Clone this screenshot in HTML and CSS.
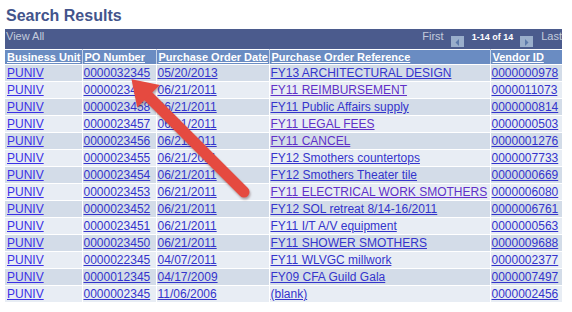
FILE: index.html
```html
<!DOCTYPE html>
<html lang="en">
<head>
  <meta charset="UTF-8" />
  <title>Search Results</title>
  <link rel="stylesheet" href="styles.css">
</head>
<body>
  <div class="page">
    <h1 class="title">Search Results</h1>

    <div class="navbar">
      <a class="view-all">View All</a>
      <div class="pager">
        <span class="pager-text">First</span>
        <span class="pager-btn">
          <svg width="13" height="11" viewBox="0 0 13 11"><rect width="13" height="11" fill="#9aaecb"/><polygon points="8,3 8,10 4.5,6.5" fill="#5c79aa"/></svg>
        </span>
        <span class="pager-count">1-14 of 14</span>
        <span class="pager-btn">
          <svg width="13" height="11" viewBox="0 0 13 11"><rect width="13" height="11" fill="#9aaecb"/><polygon points="5,3 5,10 8.5,6.5" fill="#5c79aa"/></svg>
        </span>
        <span class="pager-text">Last</span>
      </div>
    </div>

    <table class="results">
      <colgroup>
        <col class="c-unit"><col class="c-po"><col class="c-date"><col class="c-ref"><col class="c-vendor">
      </colgroup>
      <thead>
        <tr>
          <th><a>Business Unit</a></th>
          <th><a>PO Number</a></th>
          <th><a>Purchase Order Date</a></th>
          <th><a>Purchase Order Reference</a></th>
          <th><a>Vendor ID</a></th>
        </tr>
      </thead>
      <tbody>
        <tr><td><a>PUNIV</a></td><td><a>0000032345</a></td><td><a>05/20/2013</a></td><td><a>FY13 ARCHITECTURAL DESIGN</a></td><td><a>0000000978</a></td></tr>
        <tr><td><a>PUNIV</a></td><td><a>0000023459</a></td><td><a>06/21/2011</a></td><td><a class="visited">FY11 REIMBURSEMENT</a></td><td><a>0000011073</a></td></tr>
        <tr><td><a>PUNIV</a></td><td><a>0000023458</a></td><td><a>06/21/2011</a></td><td><a>FY11 Public Affairs supply</a></td><td><a>0000000814</a></td></tr>
        <tr><td><a>PUNIV</a></td><td><a>0000023457</a></td><td><a>06/21/2011</a></td><td><a class="visited">FY11 LEGAL FEES</a></td><td><a>0000000503</a></td></tr>
        <tr><td><a>PUNIV</a></td><td><a>0000023456</a></td><td><a>06/21/2011</a></td><td><a class="visited">FY11 CANCEL</a></td><td><a>0000001276</a></td></tr>
        <tr><td><a>PUNIV</a></td><td><a>0000023455</a></td><td><a>06/21/2011</a></td><td><a>FY12 Smothers countertops</a></td><td><a>0000007733</a></td></tr>
        <tr><td><a>PUNIV</a></td><td><a>0000023454</a></td><td><a>06/21/2011</a></td><td><a>FY12 Smothers Theater tile</a></td><td><a>0000000669</a></td></tr>
        <tr><td><a>PUNIV</a></td><td><a>0000023453</a></td><td><a>06/21/2011</a></td><td><a class="visited">FY11 ELECTRICAL WORK SMOTHERS</a></td><td><a>0000006080</a></td></tr>
        <tr><td><a>PUNIV</a></td><td><a>0000023452</a></td><td><a>06/21/2011</a></td><td><a>FY12 SOL retreat 8/14-16/2011</a></td><td><a>0000006761</a></td></tr>
        <tr><td><a>PUNIV</a></td><td><a>0000023451</a></td><td><a>06/21/2011</a></td><td><a>FY11 I/T A/V equipment</a></td><td><a>0000000563</a></td></tr>
        <tr><td><a>PUNIV</a></td><td><a>0000023450</a></td><td><a>06/21/2011</a></td><td><a>FY11 SHOWER SMOTHERS</a></td><td><a>0000009688</a></td></tr>
        <tr><td><a>PUNIV</a></td><td><a>0000022345</a></td><td><a>04/07/2011</a></td><td><a>FY11 WLVGC millwork</a></td><td><a>0000002377</a></td></tr>
        <tr><td><a>PUNIV</a></td><td><a>0000012345</a></td><td><a>04/17/2009</a></td><td><a>FY09 CFA Guild Gala</a></td><td><a>0000007497</a></td></tr>
        <tr><td><a>PUNIV</a></td><td><a>0000002345</a></td><td><a>11/06/2006</a></td><td><a>(blank)</a></td><td><a>0000002456</a></td></tr>
      </tbody>
    </table>
  </div>

  <!-- red callout arrow pointing at the first PO number -->
  <svg class="callout" width="572" height="312" viewBox="0 0 572 312">
    <line x1="146" y1="94" x2="244" y2="192" stroke="#e54a40" stroke-width="11" stroke-linecap="round"/>
    <polygon points="131.5,79.3 159.8,85 137.2,107.6" fill="#e54a40"/>
  </svg>
</body>
</html>
```

FILE: styles.css
```css
body {
  margin: 0;
  background: #fff;
  font-family: "Liberation Sans", Arial, sans-serif;
}

.page {
  width: 557px;
  padding: 0 5px;
}

.title {
  margin: 6px 0 4px;
  padding-left: 1px;
  font-size: 16px;
  line-height: 19px;
  font-weight: bold;
  color: #43548c;
}

a {
  text-decoration: underline;
  color: #3434cc;
  cursor: pointer;
}

/* grid navigation bar */
.navbar {
  display: flex;
  justify-content: space-between;
  height: 20px;
  box-sizing: border-box;
  padding: 1px 0 0 1px;
  background: #4b5b8d;
  font-size: 11px;
  line-height: 13px;
}

.view-all {
  color: #c3cbdc;
  text-decoration: none;
}

.pager {
  display: flex;
  align-items: flex-start;
}

.pager-text {
  color: #c3cbdc;
}

.pager-count {
  margin: 1px 0 0;
  color: #fff;
  font-weight: bold;
  font-size: 9px;
}

.pager-btn {
  display: block;
  height: 11px;
  margin: 6px 8px 0 7px;
}

.pager-btn svg {
  display: block;
}

/* results grid */
.results {
  width: 557px;
  table-layout: fixed;
  border-collapse: collapse;
  border-top: 1px solid #fff;
}

.c-unit { width: 77px; }
.c-po { width: 74px; }
.c-date { width: 113px; }
.c-ref { width: 221px; }
.c-vendor { width: 72px; }

.results th,
.results td {
  text-align: left;
  white-space: nowrap;
  overflow: hidden;
  border-right: 1px solid #fff;
  border-bottom: 1px solid #fff;
}

.results th:last-child,
.results td:last-child {
  border-right: none;
}

.results th {
  height: 14px;
  padding: 1px 1px 0 2px;
  background: #6a8cc2;
  border-right-color: #c9d5e7;
  font-size: 11px;
  line-height: 13px;
  box-sizing: border-box;
}

.results th a {
  color: #fff;
}

.results td {
  height: 16px;
  padding: 1px 1px 1px 1px;
  font-size: 12px;
  line-height: 14px;
  box-sizing: border-box;
}

.results td:first-child {
  padding-left: 2px;
}

.results td:first-child a {
  color: #3b30e6;
}

.results tbody tr:nth-child(odd) td {
  background: #d3dce8;
}

.results tbody tr:nth-child(even) td {
  background: #e8edf4;
}

.results a.visited {
  color: #6030c8;
}

.callout {
  position: absolute;
  left: 0;
  top: 0;
  pointer-events: none;
  filter: drop-shadow(1px 2px 1px rgba(60, 20, 20, 0.35));
}
```
